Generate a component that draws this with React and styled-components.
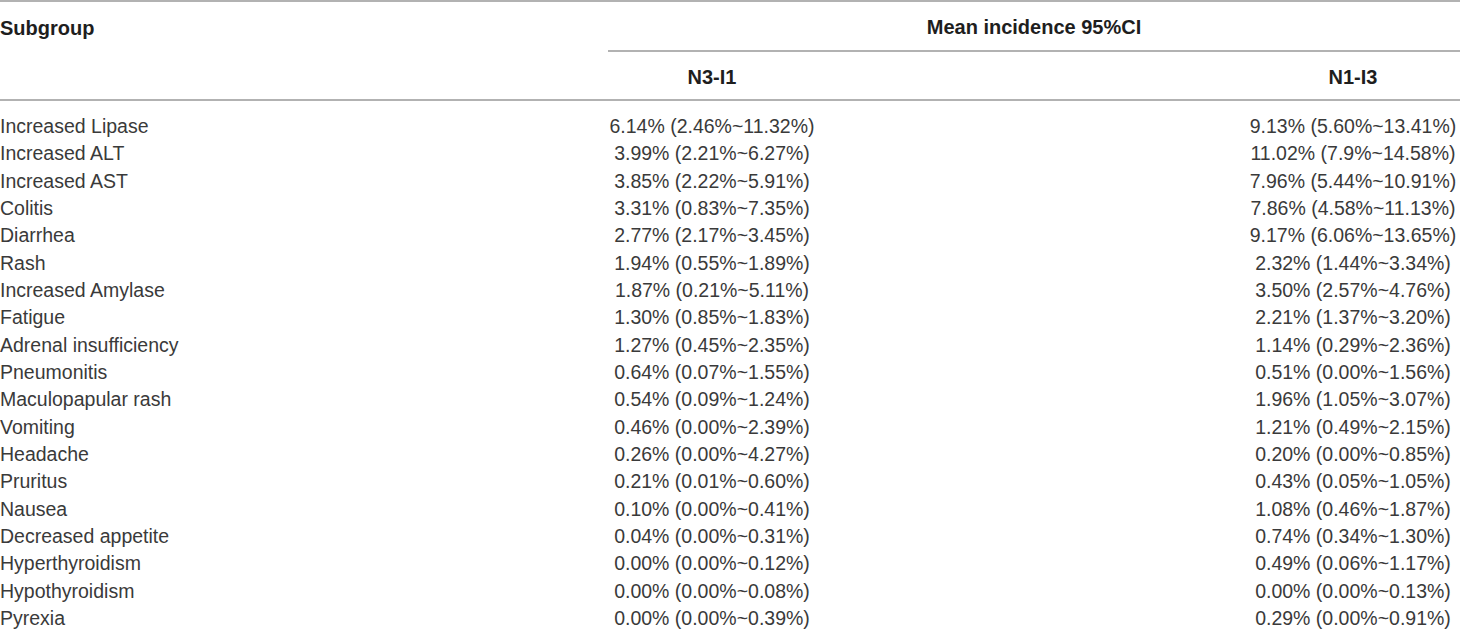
import React from "react";
import styled, { createGlobalStyle } from "styled-components";

const Global = createGlobalStyle`
  html, body { margin: 0; padding: 0; background: #fff; }
  body { font-family: "Liberation Sans", Arial, sans-serif; }
`;

const COLS = "608px 208px 1fr 214px";
const LINE = "2px solid #b2b2b2";

const Table = styled.div`
  width: 1460px;
  font-family: "Liberation Sans", Arial, sans-serif;
`;

const Head = styled.div`
  display: grid;
  grid-template-columns: ${COLS};
  grid-template-rows: 50px 47px;
  border-top: ${LINE};
  border-bottom: ${LINE};
  font-weight: 700;
  font-size: 20px;
  color: #1e1e1e;
`;

const SubgroupHead = styled.div`
  grid-column: 1;
  grid-row: 1 / span 2;
  line-height: 50px;
  padding-top: 1px;
`;

const GroupHead = styled.div`
  grid-column: 2 / -1;
  grid-row: 1;
  border-bottom: ${LINE};
  text-align: center;
  line-height: 48px;
  padding-top: 1px;
  box-sizing: border-box;
`;

const ColHead = styled.div`
  grid-row: 2;
  grid-column: ${(p) => p.$col};
  text-align: center;
  line-height: 51px;
`;

const Body = styled.div`
  padding-top: 12px;
`;

const Row = styled.div`
  display: grid;
  grid-template-columns: ${COLS};
  height: 27.33px;
  line-height: 27.33px;
  font-size: 19.5px;
  color: #3a3a3a;
`;

const Label = styled.div`
  grid-column: 1;
  white-space: nowrap;
`;

const Value = styled.div`
  grid-column: ${(p) => p.$col};
  text-align: center;
  white-space: nowrap;
`;

const rows = [
  ["Increased Lipase", "6.14% (2.46%~11.32%)", "9.13% (5.60%~13.41%)"],
  ["Increased ALT", "3.99% (2.21%~6.27%)", "11.02% (7.9%~14.58%)"],
  ["Increased AST", "3.85% (2.22%~5.91%)", "7.96% (5.44%~10.91%)"],
  ["Colitis", "3.31% (0.83%~7.35%)", "7.86% (4.58%~11.13%)"],
  ["Diarrhea", "2.77% (2.17%~3.45%)", "9.17% (6.06%~13.65%)"],
  ["Rash", "1.94% (0.55%~1.89%)", "2.32% (1.44%~3.34%)"],
  ["Increased Amylase", "1.87% (0.21%~5.11%)", "3.50% (2.57%~4.76%)"],
  ["Fatigue", "1.30% (0.85%~1.83%)", "2.21% (1.37%~3.20%)"],
  ["Adrenal insufficiency", "1.27% (0.45%~2.35%)", "1.14% (0.29%~2.36%)"],
  ["Pneumonitis", "0.64% (0.07%~1.55%)", "0.51% (0.00%~1.56%)"],
  ["Maculopapular rash", "0.54% (0.09%~1.24%)", "1.96% (1.05%~3.07%)"],
  ["Vomiting", "0.46% (0.00%~2.39%)", "1.21% (0.49%~2.15%)"],
  ["Headache", "0.26% (0.00%~4.27%)", "0.20% (0.00%~0.85%)"],
  ["Pruritus", "0.21% (0.01%~0.60%)", "0.43% (0.05%~1.05%)"],
  ["Nausea", "0.10% (0.00%~0.41%)", "1.08% (0.46%~1.87%)"],
  ["Decreased appetite", "0.04% (0.00%~0.31%)", "0.74% (0.34%~1.30%)"],
  ["Hyperthyroidism", "0.00% (0.00%~0.12%)", "0.49% (0.06%~1.17%)"],
  ["Hypothyroidism", "0.00% (0.00%~0.08%)", "0.00% (0.00%~0.13%)"],
  ["Pyrexia", "0.00% (0.00%~0.39%)", "0.29% (0.00%~0.91%)"],
];

export default function App() {
  return (
    <>
      <Global />
      <Table>
        <Head>
          <SubgroupHead>Subgroup</SubgroupHead>
          <GroupHead>Mean incidence 95%CI</GroupHead>
          <ColHead $col={2}>N3-I1</ColHead>
          <ColHead $col={4}>N1-I3</ColHead>
        </Head>
        <Body>
          {rows.map(([label, a, b]) => (
            <Row key={label}>
              <Label>{label}</Label>
              <Value $col={2}>{a}</Value>
              <Value $col={4}>{b}</Value>
            </Row>
          ))}
        </Body>
      </Table>
    </>
  );
}
